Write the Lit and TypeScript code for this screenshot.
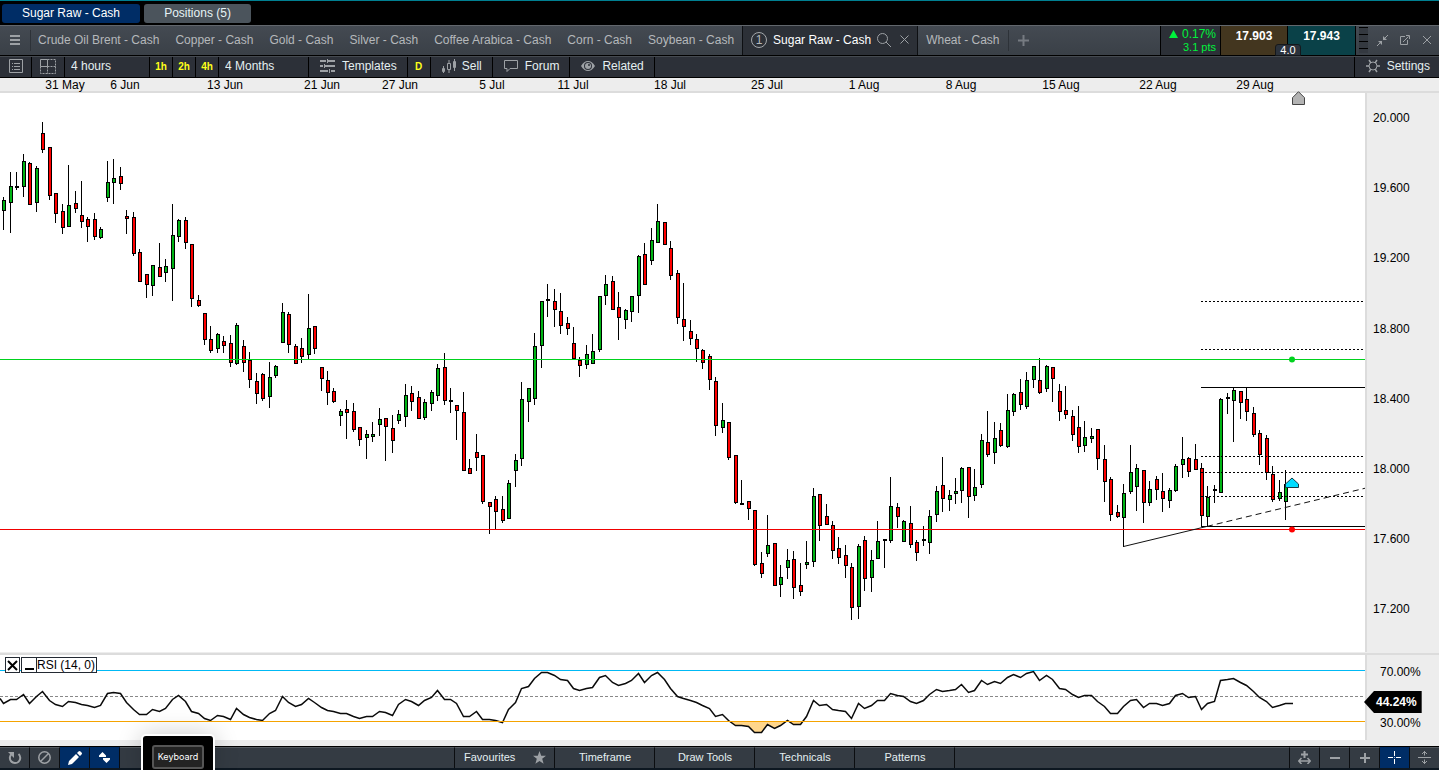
import { LitElement, html, svg, css } from "lit";
import { customElement, state } from "lit/decorators.js";

type Kind = "g" | "r" | "d";

/** One candle per entry: x, high, body top, body bottom, low, kind (g = up, r = down, d = flat). */
const CANDLES: string = `
3 197 200 211 230 g|10 172 186 203 233 g|16 172 186 188 190 d|23 154 161 187 197 g|29 162 163 205 205 r
36 166 168 203 212 g|42 122 133 150 153 r|49 147 147 196 200 r|55 193 193 214 223 r|62 204 211 228 234 r
68 165 205 227 227 g|75 191 203 209 213 r|81 181 215 222 228 r|87 217 219 227 242 r|94 213 219 237 240 r
100 227 229 238 239 g|107 161 182 198 202 g|113 159 178 183 204 g|120 167 176 184 190 r|126 210 216 219 234 r
133 212 217 254 256 r|139 249 252 282 282 r|146 274 274 285 298 r|152 265 265 286 296 g|159 243 267 277 277 r
165 259 266 273 282 g|172 204 235 269 301 g|178 219 220 237 242 g|185 217 220 243 249 r|191 244 244 299 307 r
198 295 300 306 307 r|204 313 313 340 345 r|210 326 339 351 353 r|217 333 334 349 353 g|223 336 341 346 353 r
230 335 343 363 367 r|236 323 325 364 365 g|243 340 346 363 372 r|249 352 360 380 388 r|256 373 381 394 404 r
262 373 374 399 401 r|269 362 377 397 408 g|275 365 366 376 378 g|282 303 312 343 343 g|288 312 314 345 353 r
295 344 346 364 364 r|301 338 348 357 363 r|308 294 328 355 359 g|314 326 326 349 354 r|321 367 367 379 391 r
327 371 380 393 405 r|333 388 391 402 403 r|340 409 411 416 426 g|346 400 409 413 439 r|353 403 411 430 432 r
359 427 427 440 446 r|366 430 434 438 459 g|372 422 434 437 442 g|379 408 419 425 436 g|385 418 418 427 461 r
392 415 428 441 453 r|398 410 414 421 424 g|405 384 395 417 427 g|411 386 393 402 411 r|418 391 397 419 419 r
424 399 402 418 420 g|431 390 392 404 411 g|437 364 368 396 401 g|444 353 367 401 405 r|450 388 400 402 413 d
456 405 405 411 440 r|463 392 412 471 471 r|469 459 468 474 474 r|476 434 452 458 471 r|482 455 455 502 504 r
489 502 502 507 534 r|495 496 499 512 529 r|502 496 509 521 523 r|508 480 483 519 519 g|515 454 460 471 487 g
521 382 399 459 466 g|528 388 388 402 422 g|534 333 346 399 405 g|541 301 301 346 368 g|547 284 299 301 317 d
554 289 301 310 327 r|560 293 311 326 334 r|567 317 323 329 335 r|573 327 343 359 359 r|579 357 360 366 377 r
586 345 354 365 369 g|592 334 351 364 364 g|599 296 296 350 352 g|605 275 284 296 305 g|612 276 281 310 310 r
618 292 307 318 340 r|625 309 310 320 329 g|631 296 296 312 322 g|638 255 256 296 313 g|644 243 254 285 285 r
651 228 240 261 265 g|657 204 221 243 243 g|664 222 222 245 245 r|670 241 248 276 280 r|677 270 273 318 324 r
683 283 319 327 341 r|690 320 331 339 345 r|696 334 339 349 362 r|702 349 350 363 369 r|709 354 356 380 390 r
715 377 381 426 436 r|722 403 420 428 433 g|728 422 422 458 460 r|735 455 455 503 504 r|741 480 503 505 505 d
748 501 501 509 520 r|754 510 510 565 566 r|761 552 563 574 578 r|767 515 545 554 557 g|774 543 543 586 586 r
780 565 577 585 597 g|787 549 560 568 579 g|793 551 559 588 599 r|800 563 585 592 596 r|806 541 562 565 569 g
813 488 496 562 567 g|819 494 494 526 541 r|826 504 516 525 525 r|832 521 525 551 559 r|838 537 548 558 564 r
845 545 555 566 578 r|851 563 567 608 620 r|858 544 546 607 619 g|864 536 540 579 591 r|871 550 560 578 592 g
877 521 541 559 559 g|884 539 539 541 568 d|890 477 506 541 543 g|897 503 507 517 528 r|903 520 521 542 542 g
910 506 523 545 548 r|916 540 542 553 561 r|923 526 539 541 546 d|929 510 516 543 554 g|936 486 491 515 522 g
942 457 485 499 512 r|949 490 495 500 511 g|955 478 491 494 504 g|961 467 468 491 503 g|968 467 467 497 518 r
974 469 487 496 501 g|981 434 440 485 488 g|987 411 442 455 457 r|994 422 438 453 464 g|1000 423 430 446 447 r
1007 394 410 447 448 g|1013 393 394 412 416 g|1020 379 392 405 410 r|1026 372 380 407 409 g|1033 366 366 380 388 g
1039 358 380 393 394 r|1046 365 366 389 392 g|1052 367 367 379 402 r|1059 384 391 412 421 r|1065 386 410 415 419 r
1072 410 416 435 441 r|1078 406 427 447 453 r|1084 421 437 446 452 g|1091 428 436 439 443 g|1097 429 429 459 470 r
1104 445 459 482 502 r|1110 477 479 515 521 r|1117 505 512 517 518 r|1123 484 493 518 547 g|1130 445 472 492 494 g
1136 464 468 487 511 g|1143 470 470 503 523 r|1149 481 489 503 506 g|1156 476 479 490 500 r|1162 473 491 499 512 r
1169 488 490 501 508 g|1175 464 466 491 492 g|1182 437 459 465 478 g|1188 457 458 472 477 r|1195 444 459 470 470 r
1201 463 468 516 527 r|1207 486 497 517 526 g|1214 485 489 491 503 d|1220 398 399 493 493 g|1227 393 397 399 414 d
1233 388 390 401 442 g|1240 391 391 403 419 r|1246 387 399 412 421 r|1253 407 413 435 437 r|1259 430 433 455 465 r
1266 435 438 473 480 r|1272 466 474 500 502 r|1279 480 492 499 501 g|1285 470 484 502 520 g`;

/** RSI curve height, one value per candle. */
const RSI: number[] = [
  63, 59, 59, 54, 63, 56, 51, 60, 64, 66, 61, 62, 64, 65, 67, 65, 53, 52, 53, 62, 69, 74, 74, 69, 71,
  68, 59, 55, 61, 71, 73, 78, 80, 75, 76, 79, 68, 74, 77, 79, 80, 73, 70, 56, 62, 66, 64, 58, 62, 67,
  70, 71, 73, 73, 76, 78, 76, 76, 71, 72, 75, 64, 59, 61, 65, 60, 57, 50, 59, 59, 63, 76, 76, 71, 79,
  79, 80, 82, 69, 62, 48, 46, 38, 32, 32, 35, 39, 40, 48, 50, 48, 47, 37, 35, 42, 45, 43, 40, 33, 42,
  35, 32, 39, 48, 56, 58, 60, 62, 65, 68, 76, 74, 80, 85, 85, 86, 92, 92, 84, 88, 85, 80, 84, 84, 76,
  60, 65, 64, 69, 70, 71, 78, 63, 68, 65, 60, 60, 53, 55, 56, 61, 63, 60, 54, 49, 51, 50, 49, 44, 52,
  50, 40, 44, 41, 43, 37, 34, 37, 33, 31, 40, 35, 39, 48, 49, 54, 57, 55, 55, 61, 66, 73, 73, 66, 60,
  59, 67, 63, 63, 65, 63, 55, 53, 57, 56, 69, 63, 61, 40, 39, 38, 42, 45, 51, 57, 61, 67, 65, 63,
];

const PRICE_TOP = 93;
const RSI_TOP = 15;

const candles = CANDLES.trim()
  .split(/[|\n]/)
  .map((row) => {
    const [x, h, t, b, l, k] = row.trim().split(" ");
    return { x: +x, h: +h - PRICE_TOP, t: +t - PRICE_TOP, b: +b - PRICE_TOP, l: +l - PRICE_TOP, k: k as Kind };
  });

const rsiPoints = [
  `0,${58 - RSI_TOP + 0.5}`,
  ...RSI.map((y, i) => `${candles[i].x + 0.5},${y - RSI_TOP + 0.5}`),
  `1293,${63 - RSI_TOP + 0.5}`,
].join(" ");

const DATES: [string, number][] = [
  ["31 May", 65], ["6 Jun", 125], ["13 Jun", 225], ["21 Jun", 322], ["27 Jun", 400], ["5 Jul", 492],
  ["11 Jul", 573], ["18 Jul", 670], ["25 Jul", 767], ["1 Aug", 864], ["8 Aug", 961], ["15 Aug", 1061],
  ["22 Aug", 1158], ["29 Aug", 1255],
];

const PRICES: [string, number][] = [
  ["20.000", 122], ["19.600", 192], ["19.200", 262], ["18.800", 333], ["18.400", 403], ["18.000", 473],
  ["17.600", 543], ["17.200", 613],
];

const TABS_BEFORE = [
  "Crude Oil Brent - Cash", "Copper - Cash", "Gold - Cash", "Silver - Cash", "Coffee Arabica - Cash",
  "Corn - Cash", "Soybean - Cash",
];

const base = css`
  :host { display: block; font: 12px/14px "Liberation Sans", Arial, sans-serif; }
  *, *::before, *::after { box-sizing: border-box; }
  button, select { font: inherit; color: inherit; background: none; border: 0; padding: 0; margin: 0; border-radius: 0; cursor: pointer; }
  svg { display: block; flex: none; }
  .icon { fill: none; stroke: #9da1a5; stroke-width: 1; }
  .solid { fill: #9da1a5; stroke: none; }
`;

@customElement("instrument-tabs")
export class InstrumentTabs extends LitElement {
  static styles = [base, css`
    .bar { display: flex; height: 31px; border-top: 1px solid #62676d; border-bottom: 1px solid #000; background: linear-gradient(#444a52, #3a4047); color: #b5b8bb; }
    .menu { width: 30px; display: grid; place-items: center; }
    .rule { width: 1px; height: 21px; background: #2d3238; align-self: center; margin-right: -1px; }
    .tabs { display: flex; flex: 1; min-width: 0; overflow: hidden; }
    .tab { padding: 0 8px 2px; white-space: nowrap; }
    .active { display: flex; align-items: center; background: #2c3037; border: solid #0d0f12; border-width: 0 1px; color: #fff; padding: 0 8px 2px; white-space: nowrap; }
    .num { width: 16px; height: 16px; border: 1px solid #a4a7aa; border-radius: 50%; color: #b5b8bb; line-height: 14px; text-align: center; margin-right: 6px; }
    .find { margin: 0 9px 0 6px; }
    .add { width: 31px; display: grid; place-items: center; padding-bottom: 1px; }
    .change { width: 61px; border-left: 1px solid #000; border-right: 1px solid #000; background: #2c3037; color: #00f23c; text-align: right; padding: 1px 4px 0 0; white-space: nowrap; }
    .pct { display: flex; justify-content: flex-end; align-items: center; gap: 4px; height: 14px; }
    .pts { font-size: 11px; line-height: 13px; }
    .quotes { position: relative; display: flex; }
    .sell, .buy { width: 67px; font-weight: bold; color: #fff; border-right: 1px solid #000; padding-bottom: 10px; }
    .sell { background: #43361f; }
    .buy { background: #0a4148; width: 68px; }
    .spread { position: absolute; left: 55px; bottom: 0; width: 24px; height: 10px; background: #2b323c; color: #fff; font-size: 11px; line-height: 11px; text-align: center; border-radius: 2px 2px 0 0; outline: 1px solid #15181c; }
    .grip { width: 9px; margin: 1px 0 2px 3px; background: repeating-linear-gradient(#000 0 1px, #343940 1px 7px); }
    .win { display: flex; align-items: center; gap: 12px; padding: 0 7px 1px 9px; }
  `];

  render() {
    return html`<div class="bar">
      <button class="menu" aria-label="Menu">
        <svg width="10" height="11"><path class="solid" d="M0 0h10v2H0zM0 4h10v2H0zM0 8h10v2H0z"/></svg>
      </button>
      <div class="rule"></div>
      <div class="tabs">
        ${TABS_BEFORE.map((t) => html`<button class="tab">${t}</button>`)}
        <div class="active">
          <span class="num">1</span><span>Sugar Raw - Cash</span>
          <button class="find" aria-label="Search">
            <svg class="icon" width="14" height="14"><circle cx="5.5" cy="5.5" r="5"/><path d="M9 9l5 5"/></svg>
          </button>
          <button aria-label="Close tab"><svg class="icon" width="9" height="9"><path d="M.5 .5l8 8M8.500 .5l-8 8"/></svg></button>
        </div>
        <button class="tab">Wheat - Cash</button>
        <div class="rule"></div>
        <button class="add" aria-label="Add tab">
          <svg width="11" height="11"><path fill="#767b81" d="M4.500 0h2v4.500H11v2H6.500V11h-2V6.500H0v-2h4.500z"/></svg>
        </button>
      </div>
      <div class="change">
        <div class="pct"><svg width="9" height="8"><path fill="#00f23c" d="M4.500 0L9 8H0z"/></svg>0.17%</div>
        <div class="pts">3.1 pts</div>
      </div>
      <div class="quotes">
        <button class="sell">17.903</button>
        <button class="buy">17.943</button>
        <div class="spread">4.0</div>
      </div>
      <div class="grip"></div>
      <div class="win">
        <button aria-label="Collapse"><svg class="icon" width="11" height="11"><path d="M11 0L7 4M0 11l4-4"/><path class="solid" d="M6 1v4h4zM1 6h4v4z"/></svg></button>
        <button aria-label="Detach"><svg class="icon" width="10" height="10"><path d="M5 1.500H.5v8h7V5M3 7l5.500-5.500M6 .5h3.500V4"/></svg></button>
        <button aria-label="Close"><svg class="icon" width="10" height="10"><path d="M1 1l8 8M9 1L1 9"/></svg></button>
      </div>
    </div>`;
  }
}

@customElement("chart-toolbar")
export class ChartToolbar extends LitElement {
  static styles = [base, css`
    .bar { display: flex; height: 22px; border-top: 1px solid #454a50; border-bottom: 1px solid #000; background: #2c3038; color: #e4eff1; }
    .cell { display: flex; align-items: center; border-right: 1px solid #000; white-space: nowrap; padding-bottom: 2px; }
    .list { width: 32px; justify-content: center; }
    .grid { width: 33px; justify-content: center; }
    select { appearance: none; outline: 0; padding: 0 0 2px 6px; border-right: 1px solid #000; }
    .interval { width: 85px; }
    .range { width: 90px; }
    .fast { width: 23px; justify-content: center; color: #ffff1a; font-weight: bold; font-size: 10px; padding-bottom: 1px; }
    .tool { padding: 0 10px 2px 11px; gap: 6px; }
    .wide { gap: 7px; }
    .fill { flex: 1; border-right: 1px solid #000; }
    .end { border: 0; padding-right: 9px; }
  `];

  render() {
    return html`<div class="bar">
      <button class="cell list" aria-label="Watchlist">
        <svg class="icon" width="14" height="14"><path d="M.5 .5h13v13H.5zM5 4.500h6M5 7.500h6M5 10.500h6M3 4.500h1M3 7.500h1M3 10.500h1"/></svg>
      </button>
      <button class="cell grid" aria-label="Layout">
        <svg class="icon" width="16" height="15"><path d="M.5 .5h7v7h-7z"/><path stroke-dasharray="2 1" d="M7.500 .5h8v14H.5v-7h15M7.500 7.500v7"/></svg>
      </button>
      <select class="interval" aria-label="Interval"><option>4 hours</option><option>1 hour</option></select>
      <button class="cell fast">1h</button>
      <button class="cell fast">2h</button>
      <button class="cell fast">4h</button>
      <select class="range" aria-label="Range"><option>4 Months</option><option>1 Month</option></select>
      <button class="cell tool wide">
        <svg class="icon" width="15" height="14"><path stroke-width="2" d="M0 2h6M8 2h7M0 7h3M5 7h10M0 12h8M11 12h4"/><path d="M7.500 0v4M4.500 5v4M9.500 10v4"/></svg>Templates
      </button>
      <button class="cell fast">D</button>
      <button class="cell tool">
        <svg class="icon" width="14" height="14"><path d="M.5 9.500h2v3h-2zM1.500 7v7M5.500 4.500h3v6h-3zM7 1v3M7 11v3M11.500 2.500h2v6h-2zM12.500 0v12"/></svg>Sell
      </button>
      <button class="cell tool wide">
        <svg class="icon" width="14" height="12"><path d="M.5 .5h13v8H6l-3 3v-3H.500z"/></svg>Forum
      </button>
      <button class="cell tool wide">
        <svg width="14" height="10"><path class="solid" fill-rule="evenodd" d="M0 5Q3 0 7 0t7 5q-3 5-7 5T0 5zM7 1a4 4 0 100 8 4 4 0 000-8z"/><circle class="solid" cx="7" cy="5" r="3"/><circle cx="8" cy="4" r="1" fill="#2c3038"/></svg>Related
      </button>
      <div class="fill"></div>
      <button class="cell tool wide end">
        <svg class="icon" width="14" height="14"><circle cx="7" cy="7" r="4"/><path stroke-width="1.500" d="M0 7h3M11 7h3M3 1l2 3M11 1L9 4M3 13l2-3M11 13l-2-3"/></svg>Settings
      </button>
    </div>`;
  }
}

@customElement("price-chart")
export class PriceChart extends LitElement {
  static styles = [base, css`
    :host { display: flex; flex-direction: column; flex: 1; background: #ededed; color: #000; }
    .dates { position: relative; z-index: 1; height: 15px; border-bottom: 2px solid #dcdcdc; }
    .dates svg, .row svg { width: 100%; height: 100%; overflow: visible; }
    text { font: 12px "Liberation Sans", Arial, sans-serif; fill: #000; }
    .mid { text-anchor: middle; }
    .dates .now { position: absolute; left: 1292px; top: 13px; width: 13px; height: 14px; }
    .row { display: flex; }
    .price { flex: 1; min-height: 559px; }
    .plot { flex: 1; min-width: 0; background: #fff; overflow: hidden; position: relative; }
    .axis { width: 74px; border-left: 2px solid #dcdcdc; position: relative; }
    .split { height: 3px; border-bottom: 2px solid #dcdcdc; }
    .rsi { height: 85px; }
    .foot { height: 6px; }
    .k { stroke: #000; fill: none; shape-rendering: crispEdges; }
    .g { fill: #00b414; }
    .r { fill: #ff0000; }
    .d { fill: #000; }
    .label { position: absolute; left: 5px; top: 2px; display: flex; }
    .box { height: 16px; width: 15px; border: 1px solid #232a33; background: #fff; display: grid; place-items: center; }
    .line { margin-left: 1px; width: 16px; }
    .name { width: auto; line-height: 14px; margin-left: -1px; padding-right: 1px; }
    .value { position: absolute; left: -3px; top: 36px; display: flex; align-items: center; height: 22px; padding: 0 5px 0 12px; background: #000; color: #fff; font-weight: bold; clip-path: polygon(0 50%, 10px 0, 100% 0, 100% 100%, 10px 100%); }
  `];

  private hline(y: number, x: number, stroke: string, dash = "none") {
    return svg`<line class="k" x1=${x} x2="100%" y1=${y - PRICE_TOP + 0.5} y2=${y - PRICE_TOP + 0.5} style="stroke:${stroke}" stroke-dasharray=${dash} />`;
  }

  render() {
    return html`
      <div class="dates">
        <svg>${DATES.map(([t, x]) => svg`<text class="mid" x=${x} y="11">${t}</text>`)}</svg>
        <svg class="now"><path d="M6.500 .7l6 6v6.800H.5V6.700z" fill="#b3b3b3" stroke="#444"/></svg>
      </div>
      <div class="row price">
        <div class="plot">
          <svg>
            ${candles.map((c) => svg`
              <line class="k" x1=${c.x + 0.5} x2=${c.x + 0.5} y1=${c.h} y2=${c.l} />
              ${c.k === "d"
                ? svg`<rect class="d" x=${c.x - 1} y=${c.t} width="4" height="2" />`
                : svg`<rect class="d" x=${c.x - 1} y=${c.t} width="4" height=${c.b - c.t} /><rect class=${c.k} x=${c.x} y=${c.t + 1} width="2" height=${c.b - c.t - 2} />`}`)}
            ${[301, 349, 456, 472, 496].map((y) => this.hline(y, 1201, "#000", "2 2"))}
            ${this.hline(387, 1201, "#000")}
            ${this.hline(526, 1201, "#000")}
            ${this.hline(359, 0, "#00d21e")}
            ${this.hline(529, 0, "#f00000")}
            <path d="M1123.500 453.500L1207 433.400" stroke="#111" fill="none"/>
            <path d="M1207 433.400L1366 395" stroke="#111" fill="none" stroke-dasharray="6 4"/>
            <circle cx="1292" cy="266.500" r="3" fill="#00d21e"/>
            <circle cx="1292" cy="436.500" r="3" fill="#f00"/>
            <path d="M1292 385l6.500 6v3.500h-13V391z" fill="#00dcff" stroke="#123c46"/>
          </svg>
        </div>
        <div class="axis">
          <svg>${PRICES.map(([t, y]) => svg`<text x="6" y=${y - PRICE_TOP}>${t}</text>`)}</svg>
        </div>
      </div>
      <div class="split"></div>
      <div class="row rsi">
        <div class="plot">
          <svg>
            <defs><clipPath id="low"><rect x="0" y="66" width="100%" height="19"/></clipPath></defs>
            <line class="k" x2="100%" y1="15.500" y2="15.500" style="stroke:#00b9f5"/>
            <line class="k" x2="100%" y1="41.500" y2="41.500" style="stroke:#888" stroke-dasharray="3 2"/>
            <polygon points="0,66 ${rsiPoints} 1293,66" fill="#ffd68c" clip-path="url(#low)"/>
            <polyline points=${rsiPoints} fill="none" stroke="#0a0a0a" stroke-width="1.500"/>
            <line class="k" x2="100%" y1="66.500" y2="66.500" style="stroke:#f5a300"/>
          </svg>
          <div class="label">
            <button class="box" aria-label="Remove RSI"><svg style="width:9px;height:9px"><path d="M0 0l9 9M9 0L0 9" stroke="#000" stroke-width="2"/></svg></button>
            <button class="box line" aria-label="Minimise RSI"><svg style="width:9px;height:10px"><path d="M0 8h9v2H0z"/></svg></button>
            <div class="box name">RSI (14, 0)</div>
          </div>
        </div>
        <div class="axis">
          <svg><text x="13" y="21">70.00%</text><text x="13" y="72">30.00%</text></svg>
          <div class="value">44.24%</div>
        </div>
      </div>
      <div class="foot"></div>`;
  }
}

@customElement("bottom-bar")
export class BottomBar extends LitElement {
  static styles = [base, css`
    .bar { display: flex; height: 24px; border-top: 1px solid #000; border-bottom: 2px solid #0d1721; background: #343b43; color: #e4eff1; font-size: 11px; }
    .tool { width: 30px; display: grid; place-items: center; border-top: 1px solid #555b61; border-right: 1px solid #0b0d10; padding-bottom: 1px; }
    .on { background: #002d66; border-top-color: #002d66; }
    .space { flex: 1; border-top: 1px solid #555b61; border-right: 1px solid #0b0d10; }
    .page { width: 100px; border-top: 1px solid #555b61; border-right: 1px solid #0b0d10; padding: 0 0 2px 1px; }
    .fav { display: flex; align-items: center; justify-content: space-between; padding: 0 8px 2px 9px; }
    .last { border-right: 0; width: 29px; }
  `];

  render() {
    return html`<div class="bar">
      <button class="tool" aria-label="Reset"><svg class="icon" width="14" height="14"><path stroke-width="2" d="M4 2.700A5.200 5.200 0 1 0 10.500 3"/><path class="solid" d="M0 1h6v6z"/></svg></button>
      <button class="tool" aria-label="Disable"><svg class="icon" width="13" height="13"><circle cx="6.500" cy="6.500" r="5.700" stroke-width="1.500"/><path stroke-width="1.500" d="M2.500 10.500l8-8"/></svg></button>
      <button class="tool on" aria-label="Draw"><svg width="14" height="14"><path fill="#fff" d="M0 14l1-4 7-7 3 3-7 7zM9 2l1.500-1.500q1-1 2 0l1 1q1 1 0 2L12 5z"/></svg></button>
      <button class="tool on" aria-label="Scale"><svg width="11" height="11"><path fill="#fff" d="M3.500 0L7 3.500V5H0V3.500zM4 6h7v1.500L7.500 11 4 7.500z"/></svg></button>
      <div class="space"></div>
      <button class="page fav"><span>Favourites</span><svg width="13" height="13"><path class="solid" d="M6.500 0l1.700 4.700 4.800.1-3.800 3 1.400 5-4.100-2.900-4.100 2.900 1.400-5L0 4.800l4.800-.1z"/></svg></button>
      ${["Timeframe", "Draw Tools", "Technicals", "Patterns"].map((t) => html`<button class="page">${t}</button>`)}
      <div class="space"></div>
      <button class="tool" aria-label="Stretch"><svg class="icon" width="13" height="13"><path stroke-width="2" d="M6.500 0v7M3 3.500h7"/><path stroke-width="1.500" d="M1 10h11M3.500 7L.7 10l2.800 3M9.500 7l2.800 3-2.800 3"/></svg></button>
      <button class="tool" aria-label="Zoom out"><svg width="10" height="2"><path class="solid" d="M0 0h10v2H0z"/></svg></button>
      <button class="tool" aria-label="Zoom in"><svg width="10" height="10"><path class="solid" d="M4 0h2v4h4v2H6v4H4V6H0V4h4z"/></svg></button>
      <button class="tool on" aria-label="Crosshair"><svg width="13" height="13"><path stroke="#fff" d="M6.500 0v5M6.500 8v5M0 6.500h5M8 6.500h5"/><path stroke="#8fb0d8" d="M6 6.500h1"/></svg></button>
      <button class="tool last" aria-label="Fit height"><svg class="icon" width="13" height="13"><path d="M0 6.500h13M6.500 0v4.500M6.500 8.500V13M4 3l2.500-2.500L9 3M4 10l2.500 2.500L9 10"/></svg></button>
    </div>`;
  }
}

@customElement("app-root")
export class AppRoot extends LitElement {
  @state() private page = 0;

  static styles = [base, css`
    :host { display: flex; flex-direction: column; min-height: 100vh; position: relative; overflow: hidden; background: #000; }
    .top { display: flex; gap: 4px; height: 25px; padding: 3px 2px 2px; border-top: 1px solid #007f91; background: #000; }
    .pick { padding: 0 20px 2px; border-radius: 3px; background: #4b545c; color: #e6f3f5; min-width: 107px; }
    .sel { background: #002d66; min-width: 138px; color: #fff; }
    .keys { position: absolute; left: 141px; bottom: -6px; width: 74px; height: 42px; border: 2px solid #fff; border-radius: 5px; background: #000; display: grid; place-items: start center; padding-top: 9px; box-shadow: 0 0 24px rgba(0, 0, 0, 0.2); z-index: 2; }
    .key { width: 52px; height: 24px; border: 2px solid #555; border-radius: 3px; background: #232323; color: #fff; font: 9px/20px Inter, sans-serif; }
  `];

  render() {
    return html`
      <div class="top">
        ${["Sugar Raw - Cash", "Positions (5)"].map((t, i) => html`
          <button class=${i === this.page ? "pick sel" : "pick"} @click=${() => (this.page = i)}>${t}</button>`)}
      </div>
      <instrument-tabs></instrument-tabs>
      <chart-toolbar></chart-toolbar>
      <price-chart></price-chart>
      <bottom-bar></bottom-bar>
      <div class="keys"><button class="key">Keyboard</button></div>`;
  }
}
